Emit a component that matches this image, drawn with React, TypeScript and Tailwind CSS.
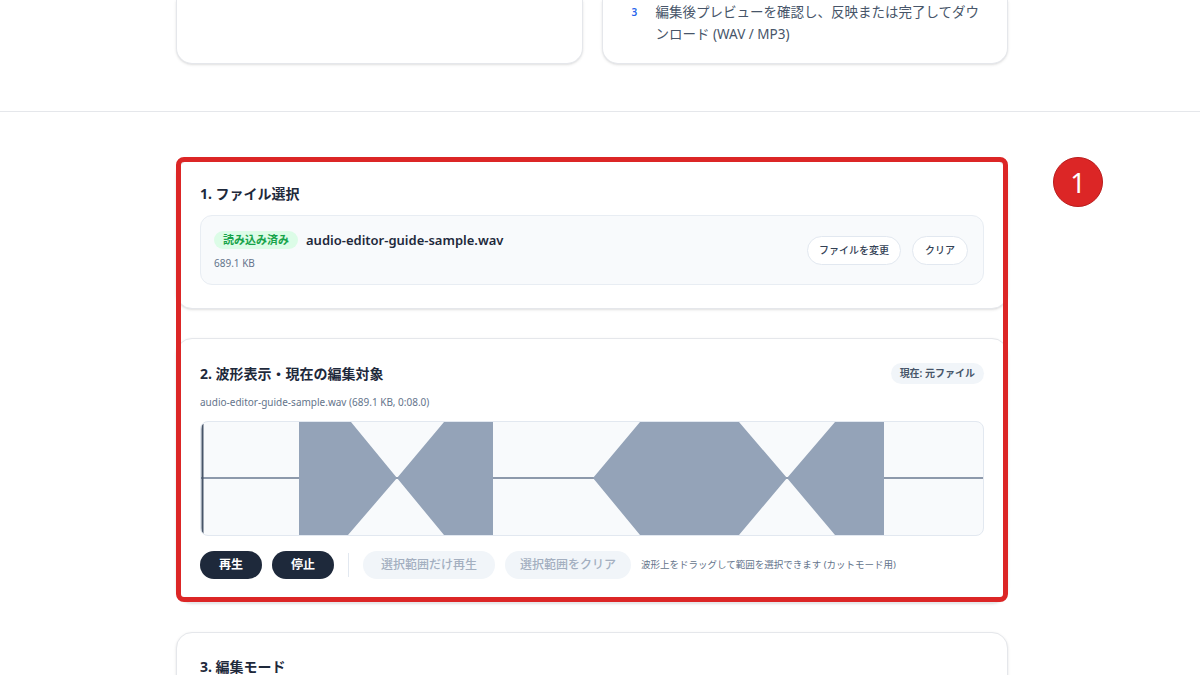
const font = { fontFamily: '"Noto Sans", "Noto Sans CJK JP", sans-serif' };

const Waveform = () => (
  <div className="relative h-[115px] overflow-hidden rounded-lg border border-[#e2e8f0] bg-[#f8fafc]">
    <svg width="784" height="115" viewBox="0 0 784 115" className="block">
      <line x1="0" y1="56" x2="784" y2="56" stroke="#8d99ab" strokeWidth="2" />
      <polygon
        points="98,0 150,0 196,56 243,0 292,0 292,113 243,113 196,56 147,113 98,113"
        fill="#94a3b8"
      />
      <polygon
        points="392,56 439,0 538,0 586,56 634,0 683,0 683,113 634,113 586,56 538,113 439,113"
        fill="#94a3b8"
      />
      <line x1="1.5" y1="2" x2="1.5" y2="112" stroke="#475569" strokeWidth="2" />
    </svg>
  </div>
);

export default function App() {
  return (
    <div className="min-h-screen overflow-hidden bg-white" style={font}>
      {/* how-to cards, scrolled mostly out of view */}
      <div className="ml-[176px] grid w-[832px] grid-cols-2 gap-[19px]">
        <div className="h-[64px] rounded-b-2xl border-x border-b border-[#e5e7eb] bg-white shadow-sm" />
        <div className="h-[64px] rounded-b-2xl border-x border-b border-[#e5e7eb] bg-white pl-[29px] pr-[22px] pt-[1px] shadow-sm">
          <div className="flex">
            <span className="w-[24px] shrink-0 text-[10px] font-semibold leading-[22px] text-[#2563eb]">3</span>
            <p className="w-[328px] text-[13.5px] leading-[22px] text-[#475569]">
              編集後プレビューを確認し、反映または完了してダウンロード (WAV / MP3)
            </p>
          </div>
        </div>
      </div>

      <div className="mt-[47px] border-t border-[#e5e7eb]" />

      <div className="ml-[176px] w-[832px] pt-[47px]">
        <div className="relative flex flex-col gap-[29px]">
          {/* 1. file */}
          <section className="h-[150px] rounded-2xl border border-[#e5e7eb] bg-white px-[23px] pt-6 shadow-sm">
            <h2 className="text-[14px] font-bold leading-5 text-[#1e293b]">1. ファイル選択</h2>
            <div className="mt-[11px] flex h-[70px] items-center justify-between rounded-xl border border-[#e8edf3] bg-[#f8fafc] pl-[13px] pr-[15px]">
              <div>
                <div className="flex items-center gap-2">
                  <span className="rounded-full bg-[#dcfce7] px-[9px] text-[11px] font-semibold leading-[18px] text-[#16a34a]">
                    読み込み済み
                  </span>
                  <span className="text-[13px] font-semibold leading-[18px] text-[#1e293b]">
                    audio-editor-guide-sample.wav
                  </span>
                </div>
                <div className="mt-[7px] text-[10px] leading-[14px] text-[#64748b]">689.1 KB</div>
              </div>
              <div className="flex gap-[11px]">
                <button className="h-[29px] rounded-full border border-[#e2e8f0] bg-white px-[11px] text-[10px] font-medium text-[#334155]">
                  ファイルを変更
                </button>
                <button className="h-[29px] rounded-full border border-[#e2e8f0] bg-white px-[12px] text-[10px] font-medium text-[#334155]">
                  クリア
                </button>
              </div>
            </div>
          </section>

          {/* 2. waveform */}
          <section className="rounded-2xl border border-[#e5e7eb] bg-white px-[23px] pb-[23px] pt-[24px] shadow-sm">
            <div className="flex h-[21px] items-center justify-between">
              <h2 className="text-[14px] font-bold leading-5 text-[#1e293b]">2. 波形表示・現在の編集対象</h2>
              <span className="rounded-full bg-[#f1f5f9] px-[9px] text-[10px] font-semibold leading-[21px] text-[#475569]">
                現在: 元ファイル
              </span>
            </div>
            <p className="mt-[11px] text-[10px] leading-[14px] text-[#64748b]">
              audio-editor-guide-sample.wav (689.1 KB, 0:08.0)
            </p>
            <div className="mt-[12px]">
              <Waveform />
            </div>
            <div className="mt-[15px] flex items-center gap-[10px]">
              <button className="h-[28px] rounded-full bg-[#1e293b] px-[19px] text-[12px] font-bold text-white">再生</button>
              <button className="h-[28px] rounded-full bg-[#1e293b] px-[19px] text-[12px] font-bold text-white">停止</button>
              <span className="mx-[4px] h-[24px] w-px bg-[#e2e8f0]" />
              <button className="h-[28px] rounded-full bg-[#f1f5f9] px-[18px] text-[12px] font-medium text-[#a3afc0]">
                選択範囲だけ再生
              </button>
              <button className="h-[28px] rounded-full bg-[#f1f5f9] px-[15px] text-[12px] font-medium text-[#a3afc0]">
                選択範囲をクリア
              </button>
              <span className="text-[9.5px] text-[#64748b]">波形上をドラッグして範囲を選択できます (カットモード用)</span>
            </div>
          </section>

          {/* annotation frame */}
          <div className="pointer-events-none absolute -top-[2px] bottom-[1px] left-0 right-0 rounded-lg border-[5px] border-[#dc2626]" />
          <div className="absolute -top-[2px] left-[877px] flex h-[50px] w-[50px] items-center justify-center rounded-full border border-[#b91c1c] bg-[#dc2626] text-[27px] leading-none text-white">
            1
          </div>
        </div>

        {/* 3. mode */}
        <section className="mt-[29px] h-[120px] rounded-2xl border border-[#e5e7eb] bg-white px-[23px] pt-6 shadow-sm">
          <h2 className="text-[14px] font-bold leading-5 text-[#1e293b]">3. 編集モード</h2>
        </section>
      </div>
    </div>
  );
}
